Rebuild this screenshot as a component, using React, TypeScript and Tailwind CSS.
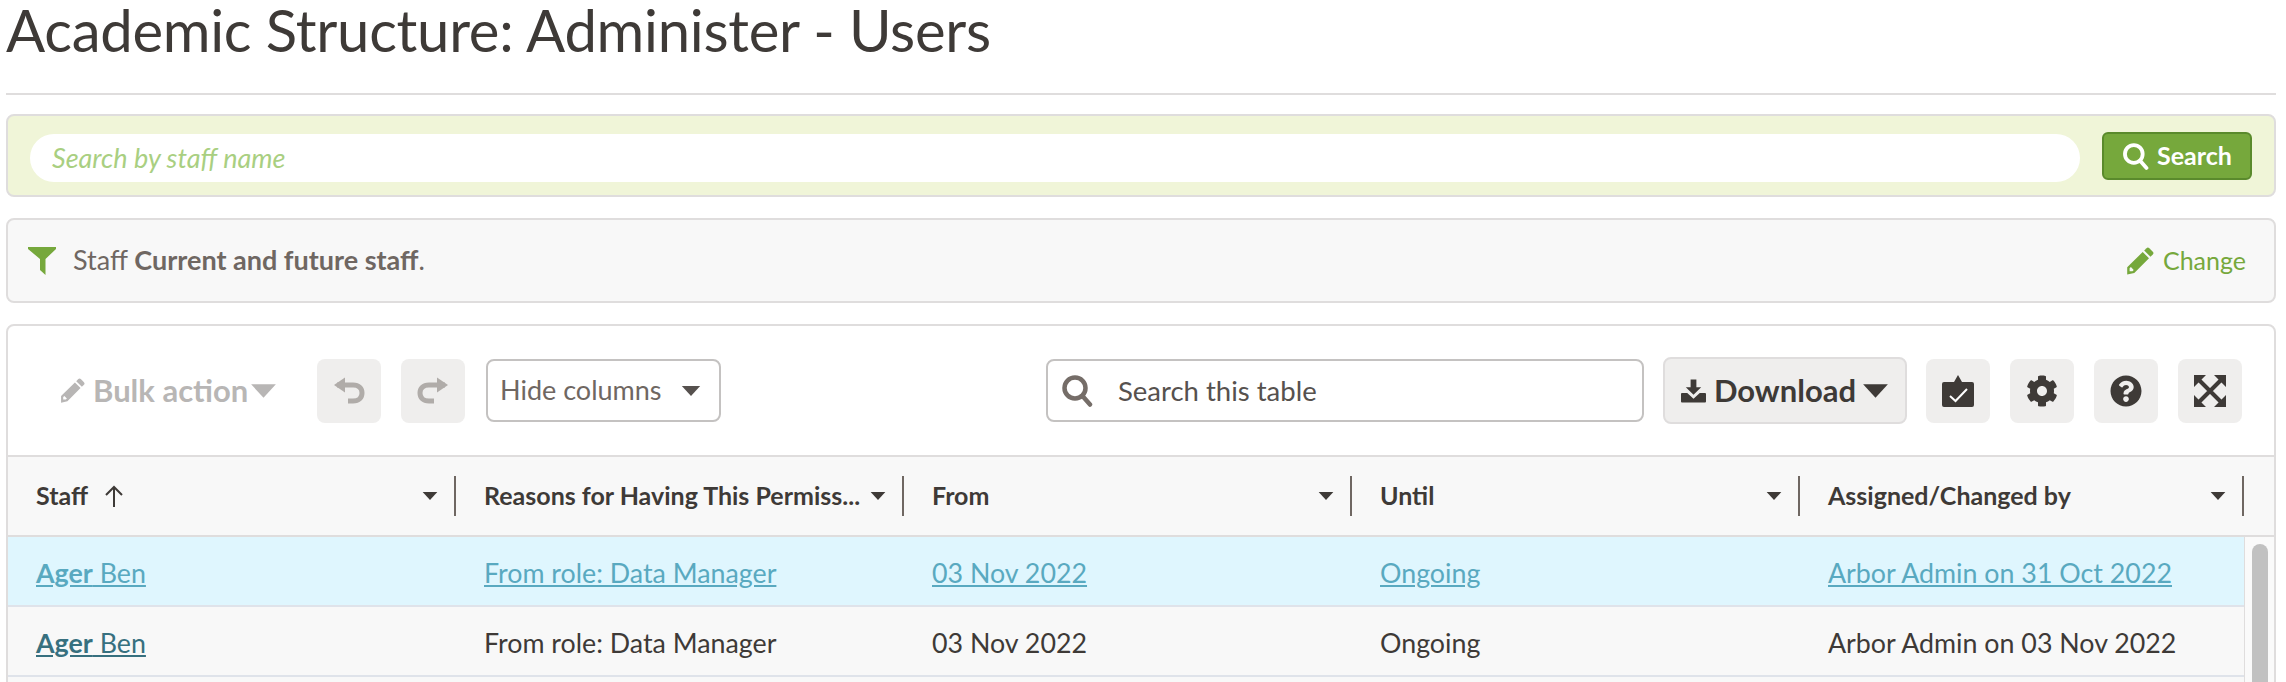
import React from 'react';
import { FaCog, FaQuestionCircle } from 'react-icons/fa';

const SearchIcon = ({ className = '' }: { className?: string }) => (
    <svg viewBox="0 0 32 32" className={className} fill="none" stroke="currentColor" strokeWidth="4.5">
        <circle cx="14" cy="13" r="10.5" />
        <path d="M21.5 21 L29 29.5" strokeLinecap="round" />
    </svg>
);

const PencilIcon = ({ className = '' }: { className?: string }) => (
    <svg viewBox="0 0 28 28" className={className} fill="currentColor">
        <path d="M20.5 1.2 a2 2 0 0 1 2.8 0 l3.5 3.5 a2 2 0 0 1 0 2.8 l-2.3 2.3 -6.3 -6.3 z" />
        <path d="M16.7 5 L23 11.3 8.3 26 1.2 27.6 V20.2 z M3.6 21.3 v2.9 h2.9 l1.2 -1.3 -2.8 -2.8 z" fillRule="evenodd" />
    </svg>
);

const FilterIcon = ({ className = '' }: { className?: string }) => (
    <svg viewBox="0 0 28 28" className={className} fill="currentColor">
        <path d="M0 0 H28 V2 L17.500 12 V28 L12 23 V12 L0 2 z" />
    </svg>
);

const Caret = ({ className = '' }: { className?: string }) => (
    <svg viewBox="0 0 24 14" className={className} fill="currentColor">
        <path d="M1 1 H23 L12 13 z" />
    </svg>
);

const UndoIcon = ({ className = '' }: { className?: string }) => (
    <svg viewBox="0 0 32 28" className={className} fill="none" stroke="currentColor" strokeWidth="5">
        <path d="M4 8 H20 C26 8 29 11.5 29 16 C29 20.5 26 24 20 24 H15" />
        <path d="M12 0.5 L1 8 L12 15.5 z" fill="currentColor" stroke="none" />
    </svg>
);

const RedoIcon = ({ className = '' }: { className?: string }) => (
    <svg viewBox="0 0 32 28" className={className} fill="none" stroke="currentColor" strokeWidth="5">
        <path d="M28 8 H12 C6 8 3 11.5 3 16 C3 20.5 6 24 12 24 H17" />
        <path d="M20 0.5 L31 8 L20 15.5 z" fill="currentColor" stroke="none" />
    </svg>
);

const DownloadIcon = ({ className = '' }: { className?: string }) => (
    <svg viewBox="0 0 26 24" className={className} fill="currentColor">
        <path d="M10 0 H16 V8 H21 L13 16 L5 8 H10 z" />
        <path d="M1 14 H6.5 L13 20 L19.5 14 H25 a1 1 0 0 1 1 1 V23 a1 1 0 0 1 -1 1 H1 a1 1 0 0 1 -1 -1 V15 a1 1 0 0 1 1 -1 z" />
    </svg>
);

const ClipboardIcon = ({ className = '' }: { className?: string }) => (
    <svg viewBox="0 0 32 32" className={className}>
        <path fill="currentColor" d="M2 7 H12 L16 0 L20 7 H30 a2 2 0 0 1 2 2 V30 a2 2 0 0 1 -2 2 H2 a2 2 0 0 1 -2 -2 V9 a2 2 0 0 1 2 -2 z" />
        <path fill="none" stroke="#fff" strokeWidth="2" d="M8 21 L13.5 26 L25 14" />
    </svg>
);

const ExpandIcon = ({ className = '' }: { className?: string }) => (
    <svg viewBox="0 0 32 32" className={className} fill="currentColor" stroke="currentColor">
        <path d="M3 3 L29 29 M29 3 L3 29" strokeWidth="4" fill="none" />
        <path d="M0 0 H12 L0 12 z M32 0 V12 L20 0 z M0 32 V20 L12 32 z M32 32 H20 L32 20 z" stroke="none" />
    </svg>
);

const IconButton = ({ children }: { children: React.ReactNode }) => (
    <button className="flex h-[64px] w-[64px] items-center justify-center rounded-lg bg-[#efeeed] text-[#3e3a37]">
        {children}
    </button>
);

const HeaderCell = ({ label, last, sort }: { label: string; last?: boolean; sort?: boolean }) => (
    <div className={`flex items-center pl-[28px] ${last ? 'w-[444px]' : 'w-[448px]'}`}>
        <span className="whitespace-nowrap text-[25px] font-bold text-[#3e3a37]">{label}</span>
        {sort && (
            <svg viewBox="0 0 20 22" className="ml-[16px] h-[22px] w-[20px]" fill="none" stroke="#3e3a37" strokeWidth="2">
                <path d="M10 22 V2 M2 10 L10 2 L18 10" />
            </svg>
        )}
        <Caret className="ml-auto mr-[16px] h-[10px] w-[16px] text-[#3e3a37]" />
        <div className="h-[40px] w-[2px] bg-[#6f6762]" />
    </div>
);

const Row = ({ highlight, cells }: { highlight?: boolean; cells: string[] }) => (
    <div className={`flex h-[70px] items-center border-b-2 border-[#dfe3ea] pt-[4px] text-[26.8px] ${highlight ? 'bg-[#dff6fe]' : 'bg-[#f8f8f8]'}`}>
        <div className="w-[448px] pl-[28px]">
            <a className={`underline ${highlight ? 'text-[#59a9c0]' : 'text-[#37707f]'}`}>
                <span className="font-bold">Ager</span> Ben
            </a>
        </div>
        {cells.map((c) => (
            <div key={c} className="w-[448px] pl-[28px] last:w-[444px]">
                {highlight ? <a className="text-[#59a9c0] underline">{c}</a> : <span className="text-[#3e3a37]">{c}</span>}
            </div>
        ))}
    </div>
);

export default function App() {
    return (
        <div className="h-[682px] w-[2286px] overflow-hidden bg-white pl-[6px] pr-[10px] font-[Lato,sans-serif]">
            <div className="flex h-[95px] border-b-2 border-[#dfdddd]">
                <h1 className="h-fit text-[58px] leading-[60px] tracking-[-0.27px] text-[#3e3a37]">Academic Structure: Administer - Users</h1>
            </div>

            <div className="mt-[19px] flex h-[83px] items-start gap-[22px] rounded-lg border-2 border-[#dfdddd] bg-[#f0f5d8] pl-[22px] pr-[22px] pt-[16px]">
                <div className="mt-[2px] flex h-[48px] flex-1 items-center rounded-full bg-white pl-[22px] text-[27px] italic text-[#a9cf81]">
                    Search by staff name
                </div>
                <button className="flex h-[48px] w-[150px] items-center justify-center gap-[8px] rounded-md border-2 border-[#5a8a2c] bg-[#76a83c] text-[25px] font-bold text-white">
                    <SearchIcon className="h-[27px] w-[27px]" />
                    Search
                </button>
            </div>

            <div className="mt-[21px] flex h-[85px] items-center rounded-lg border-2 border-[#dfdddd] bg-[#f8f8f8] pl-[20px] pr-[28px] text-[27px] text-[#6f6762]">
                <FilterIcon className="mr-[17px] h-[28px] w-[28px] text-[#76a83c]" />
                <span>
                    Staff <span className="font-bold">Current and future staff</span>.
                </span>
                <a className="ml-auto flex items-center gap-[9px] text-[25px] text-[#76a83c]">
                    <PencilIcon className="h-[28px] w-[28px]" />
                    Change
                </a>
            </div>

            <div className="mt-[21px] h-[400px] rounded-lg border-2 border-[#dfdddd] bg-white">
                <div className="flex h-[129px] items-center pl-[52px] pr-[32px]">
                    <div className="flex w-[217px] items-center text-[#b8b6b5]">
                        <PencilIcon className="mr-[8px] h-[25px] w-[25px]" />
                        <span className="text-[31px] font-bold">Bulk action</span>
                        <Caret className="ml-auto h-[16px] w-[27px]" />
                    </div>
                    <button className="ml-[40px] flex h-[64px] w-[64px] items-center justify-center rounded-lg bg-[#efeeed] text-[#b0aca9]">
                        <UndoIcon className="h-[28px] w-[32px]" />
                    </button>
                    <button className="ml-[20px] flex h-[64px] w-[64px] items-center justify-center rounded-lg bg-[#efeeed] text-[#b0aca9]">
                        <RedoIcon className="h-[28px] w-[32px]" />
                    </button>
                    <div className="ml-[21px] flex h-[63px] w-[235px] items-center rounded-lg border-2 border-[#c4c2c1] pl-[12px] pr-[18px] text-[27px] text-[#6f6762]">
                        Hide columns
                        <Caret className="ml-auto h-[12px] w-[20px] text-[#56514e]" />
                    </div>
                    <div className="ml-[325px] flex h-[63px] w-[598px] items-center rounded-lg border-2 border-[#c4c2c1] pl-[13px] text-[27.5px] text-[#56514e]">
                        <SearchIcon className="mr-[25px] h-[32px] w-[32px] text-[#756d68]" />
                        Search this table
                    </div>
                    <button className="ml-[19px] flex h-[67px] w-[244px] items-center justify-center rounded-lg border-2 border-[#dfdddd] bg-[#efeeed] text-[31px] font-bold text-[#3e3a37]">
                        <DownloadIcon className="mr-[8px] h-[24px] w-[25px]" />
                        Download
                        <Caret className="ml-[6px] h-[16px] w-[27px]" />
                    </button>
                    <div className="ml-[19px] flex gap-[20px]">
                        <IconButton>
                            <ClipboardIcon className="h-[32px] w-[32px]" />
                        </IconButton>
                        <IconButton>
                            <FaCog className="h-[32px] w-[32px]" />
                        </IconButton>
                        <IconButton>
                            <FaQuestionCircle className="h-[32px] w-[32px]" />
                        </IconButton>
                        <IconButton>
                            <ExpandIcon className="h-[32px] w-[32px]" />
                        </IconButton>
                    </div>
                </div>

                <div className="flex h-[82px] border-y-2 border-[#dfdddd] bg-[#f8f8f8]">
                    <HeaderCell label="Staff" sort />
                    <HeaderCell label="Reasons for Having This Permiss..." />
                    <HeaderCell label="From" />
                    <HeaderCell label="Until" />
                    <HeaderCell label="Assigned/Changed by" last />
                </div>

                <div className="flex">
                    <div className="w-[2236px]">
                        <Row highlight cells={['From role: Data Manager', '03 Nov 2022', 'Ongoing', 'Arbor Admin on 31 Oct 2022']} />
                        <Row cells={['From role: Data Manager', '03 Nov 2022', 'Ongoing', 'Arbor Admin on 03 Nov 2022']} />
                        <div className="h-[70px] bg-[#f8f8f8]" />
                    </div>
                    <div className="flex-1 border-l border-[#dfdddd] bg-[#fafafa] pl-[7px]">
                        <div className="mt-[7px] h-[200px] w-[16px] rounded-full bg-[#c1c1c1]" />
                    </div>
                </div>
            </div>
        </div>
    );
}
